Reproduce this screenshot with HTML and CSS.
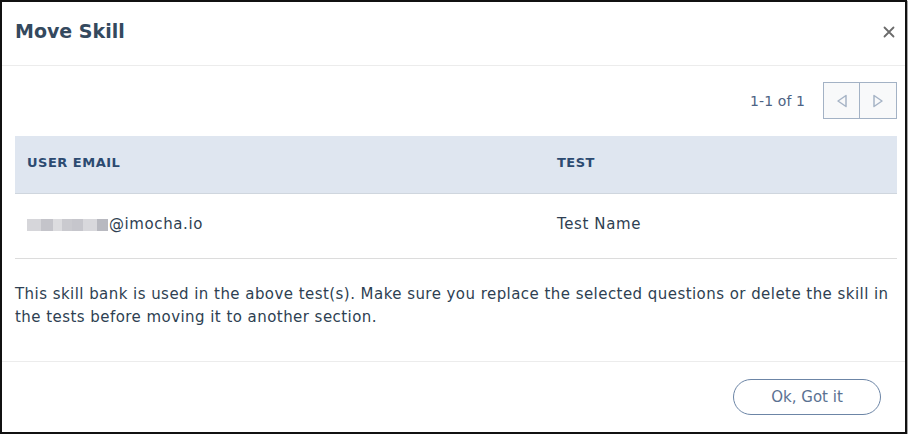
FILE: index.html
```html
<!DOCTYPE html>
<html>
<head>
<meta charset="utf-8">
<link rel="stylesheet" href="styles.css">
</head>
<body>
<div class="dialog">
  <div class="header">
    <h1 class="title">Move Skill</h1>
    <button class="close" aria-label="Close">
      <svg width="12" height="12" viewBox="0 0 12 12"><path d="M1.5 1.5L10.5 10.5M10.5 1.5L1.5 10.5" stroke="#6b6b6b" stroke-width="1.8" stroke-linecap="round"/></svg>
    </button>
  </div>
  <div class="body">
    <div class="pager">
      <span class="pager-count">1-1 of 1</span>
      <div class="pager-btns">
        <button class="pbtn"><svg width="12" height="14" viewBox="0 0 12 14"><path d="M10 1.5L2 7L10 12.5Z" fill="none" stroke="#a6b4c6" stroke-width="1.5" stroke-linejoin="round"/></svg></button>
        <button class="pbtn"><svg width="12" height="14" viewBox="0 0 12 14"><path d="M2 1.5L10 7L2 12.5Z" fill="none" stroke="#a6b4c6" stroke-width="1.5" stroke-linejoin="round"/></svg></button>
      </div>
    </div>
    <table class="grid">
      <thead>
        <tr><th class="col1">USER EMAIL</th><th>TEST</th></tr>
      </thead>
      <tbody>
        <tr><td class="col1"><span class="blur"><i class="b1"></i><i class="b2"></i><i class="b3"></i><i class="b4"></i><i class="b5"></i><i class="b6"></i><i class="b7"></i></span>@imocha.io</td><td>Test Name</td></tr>
      </tbody>
    </table>
    <p class="note">This skill bank is used in the above test(s). Make sure you replace the selected questions or delete the skill in the tests before moving it to another section.</p>
  </div>
  <div class="footer">
    <button class="ok">Ok, Got it</button>
  </div>
</div>
</body>
</html>
```
FILE: styles.css
```css
* { box-sizing: border-box; }
html, body { margin: 0; padding: 0; background: #fff; }
body { font-family: "DejaVu Sans", "Noto Sans", sans-serif; color: #2d3e50; }
.dialog {
  width: 907px;
  height: 434px;
  border: 2px solid #111;
  box-shadow: 1px 1px 1px rgba(0,0,0,0.35);
  display: flex;
  flex-direction: column;
  background: #fff;
}
.header {
  height: 64px;
  border-bottom: 1px solid #ececec;
  display: flex;
  align-items: center;
  justify-content: space-between;
  padding: 0 9px 6px 13px;
  flex: none;
}
.title {
  margin: 0;
  font-size: 19px;
  font-weight: bold;
  color: #34495e;
}
.close {
  border: 0;
  background: none;
  padding: 0;
  width: 14px;
  height: 14px;
  display: flex;
  align-items: center;
  justify-content: center;
  margin-top: 2px;
}
.body {
  padding: 16px 8px 0 13px;
  border-bottom: 1px solid #ececec;
  flex: 1;
}
.pager {
  display: flex;
  justify-content: flex-end;
  align-items: center;
  gap: 18px;
  height: 37px;
}
.pager-count { font-size: 14px; color: #4d6384; letter-spacing: 0.1px; }
.pager-btns { display: flex; }
.pbtn {
  width: 37px;
  height: 37px;
  border: 1px solid #a3b2c5;
  background: #f8f9fa;
  display: flex;
  align-items: center;
  justify-content: center;
  padding: 0;
}
.pbtn + .pbtn { margin-left: -1px; width: 38px; }
.grid {
  margin-top: 17px;
  width: 100%;
  border-collapse: collapse;
}
.grid th {
  background: #dfe6f0;
  height: 57px;
  text-align: left;
  font-size: 13px;
  letter-spacing: 0.5px;
  font-weight: bold;
  color: #2c4a70;
  padding: 0 12px 3px;
  border-bottom: 1px solid #cfd6de;
}
.grid td {
  height: 65px;
  font-size: 15px;
  letter-spacing: 0.6px;
  color: #2f3f52;
  padding: 0 12px 3px;
  border-bottom: 1px solid #dcdcdc;
}
.grid .col1 { width: 530px; }
.blur { display: inline-flex; vertical-align: -2px; margin-right: 1px; }
.blur i { display: inline-block; height: 12px; }
.b1 { width: 14px; background: #d6d6da; }
.b2 { width: 12px; background: #c4c4ca; }
.b3 { width: 9px; background: #dcdcdf; }
.b4 { width: 10px; background: #cacacf; }
.b5 { width: 11px; background: #c6c6cc; }
.b6 { width: 14px; background: #d8d8dc; }
.b7 { width: 11px; background: #b8b9c0; }
.note {
  margin: 24px 0 0 0;
  font-size: 15px;
  letter-spacing: 0.45px;
  line-height: 23px;
  color: #2e3f52;
  padding-right: 0;
}
.footer {
  height: 70px;
  flex: none;
  display: flex;
  align-items: center;
  justify-content: flex-end;
  padding: 0 24px 0 0;
}
.ok {
  width: 148px;
  height: 36px;
  border: 1px solid #6c85a6;
  border-radius: 18px;
  background: #fff;
  color: #5b7192;
  font-family: inherit;
  font-size: 15px;
}
```
